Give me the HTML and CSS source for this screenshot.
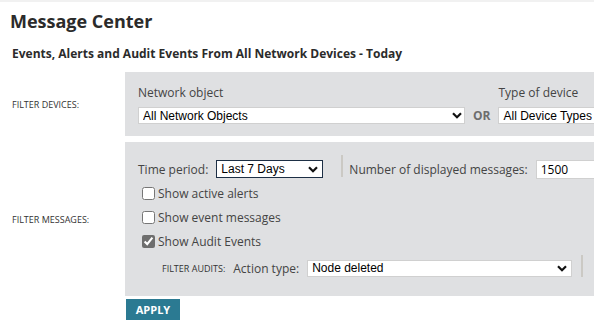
FILE: index.html
```html
<!DOCTYPE html>
<html lang="en">
<head>
    <meta charset="UTF-8">
    <meta name="viewport" content="width=device-width, initial-scale=1.0">
    <title>Message Center</title>
    <link rel="stylesheet" href="styles.css">
</head>
<body>
    <div class="page">
        <h1 class="page-title">Message Center</h1>
        <h2 class="page-subtitle">Events, Alerts and Audit Events From All Network Devices - Today</h2>

        <div class="filter-row">
            <div class="filter-label">Filter devices:</div>
            <div class="filter-panel devices">
                <div class="field">
                    <label class="field-label">Network object</label>
                    <div class="select-wrap objects">
                        <select><option>All Network Objects</option></select>
                        <svg class="chevron" width="10" height="7" viewBox="0 0 10 7"><polyline points="1,1.2 5,5.2 9,1.2" fill="none" stroke="#111" stroke-width="2.2"/></svg>
                    </div>
                </div>
                <span class="or">OR</span>
                <div class="field">
                    <label class="field-label">Type of device</label>
                    <div class="select-wrap types">
                        <select><option>All Device Types</option></select>
                        <svg class="chevron" width="10" height="7" viewBox="0 0 10 7"><polyline points="1,1.2 5,5.2 9,1.2" fill="none" stroke="#111" stroke-width="2.2"/></svg>
                    </div>
                </div>
            </div>
        </div>

        <div class="filter-row">
            <div class="filter-label">Filter messages:</div>
            <div class="filter-panel messages">
                <div class="line period-line">
                    <span class="text">Time period:</span>
                    <div class="select-wrap period">
                        <select><option>Last 7 Days</option></select>
                        <svg class="chevron" width="10" height="7" viewBox="0 0 10 7"><polyline points="1,1.2 5,5.2 9,1.2" fill="none" stroke="#111" stroke-width="2.2"/></svg>
                    </div>
                    <span class="divider"></span>
                    <span class="text">Number of displayed messages:</span>
                    <input class="count" type="text" value="1500">
                </div>
                <label class="check"><input type="checkbox"> Show active alerts</label>
                <label class="check"><input type="checkbox"> Show event messages</label>
                <label class="check locked"><input type="checkbox" checked> Show Audit Events</label>
                <div class="line audits-line">
                    <span class="sub-label">Filter audits:</span>
                    <span class="text">Action type:</span>
                    <div class="select-wrap action">
                        <select><option>Node deleted</option></select>
                        <svg class="chevron" width="10" height="7" viewBox="0 0 10 7"><polyline points="1,1.2 5,5.2 9,1.2" fill="none" stroke="#111" stroke-width="2.2"/></svg>
                    </div>
                    <span class="divider"></span>
                </div>
            </div>
        </div>

        <button class="apply">APPLY</button>
    </div>
</body>
</html>
```

FILE: styles.css
```css
html, body {
    margin: 0;
    overflow: hidden;
}
body {
    font-family: "Open Sans", "Liberation Sans", sans-serif;
    color: #333;
    background: #fff;
    border-top: 2px solid #f1f1f1;
}
.page-title {
    margin: 0;
    padding: 6px 10px 0;
    font-size: 18px;
    font-weight: 700;
    line-height: 26px;
    color: #2b2b2b;
}
.page-subtitle {
    margin: 12px 0 10px;
    padding-left: 12px;
    font-size: 12px;
    font-weight: 700;
    line-height: 16px;
    color: #2b2b2b;
}
.filter-row {
    display: flex;
    align-items: center;
}
.filter-row + .filter-row {
    margin-top: 6px;
}
.filter-label {
    width: 113px;
    padding-left: 12px;
    flex: none;
    font-size: 9px;
    text-transform: uppercase;
    color: #333;
}
.filter-panel {
    flex: none;
    width: 620px;
    background: #dfe0e2;
    box-sizing: border-box;
}
.devices {
    display: flex;
    align-items: flex-end;
    padding: 13px 0 12px 13px;
}
.field {
    display: flex;
    flex-direction: column;
}
.field-label {
    font-size: 12px;
    line-height: 16px;
    color: #444;
    margin-bottom: 6px;
}
.or {
    margin: 0 8px;
    font-size: 12px;
    font-weight: 700;
    line-height: 17px;
    color: #6d6d6d;
}
.select-wrap {
    position: relative;
}
.select-wrap select {
    display: block;
    width: 100%;
    height: 17px;
    margin: 0;
    padding: 0 18px 0 4px;
    border: 1px solid #d0d0d0;
    background: #fff;
    font-family: "Liberation Sans", Arial, sans-serif;
    font-size: 12px;
    color: #000;
    appearance: none;
    -webkit-appearance: none;
    border-radius: 0;
}
.select-wrap .chevron {
    position: absolute;
    right: 3px;
    top: 5px;
}
.objects { width: 327px; }
.types { width: 160px; }
.period { width: 107px; }
.period select {
    height: 18px;
    border-color: #1d2f45;
}
.period .chevron { right: 5px; top: 6px; }
.action { width: 265px; }
.action .chevron { right: 5px; }

.messages {
    padding: 15px 0 16px 13px;
}
.line {
    display: flex;
    align-items: center;
    height: 24px;
    font-size: 12px;
    color: #444;
}
.text {
    margin-right: 8px;
}
.divider {
    align-self: flex-start;
    width: 2px;
    height: 22px;
    margin: -2px 6px 0 18px;
    background: #cbc9c4;
}
.count {
    width: 80px;
    height: 17px;
    margin: 0;
    padding: 0 4px;
    border: 1px solid #d0d0d0;
    font-family: "Open Sans", sans-serif;
    font-size: 12px;
    color: #000;
}
.check {
    display: flex;
    align-items: center;
    height: 24px;
    font-size: 12px;
    color: #444;
}
.check input {
    width: 13px;
    height: 13px;
    margin: 0 3px 0 4px;
}
.locked input {
    accent-color: #6e6e6e;
}
.audits-line {
    margin-top: 3px;
}
.sub-label {
    margin-left: 24px;
    margin-right: 8px;
    font-size: 9px;
    text-transform: uppercase;
    color: #333;
}
.audits-line .divider {
    margin: -1px 0 0 9px;
}
.apply {
    display: block;
    margin: 3px 0 0 126px;
    width: 54px;
    height: 21px;
    padding: 0;
    border: none;
    background: #2b7a92;
    color: #fff;
    font-family: "Open Sans", sans-serif;
    font-size: 11px;
    font-weight: 700;
}
```
